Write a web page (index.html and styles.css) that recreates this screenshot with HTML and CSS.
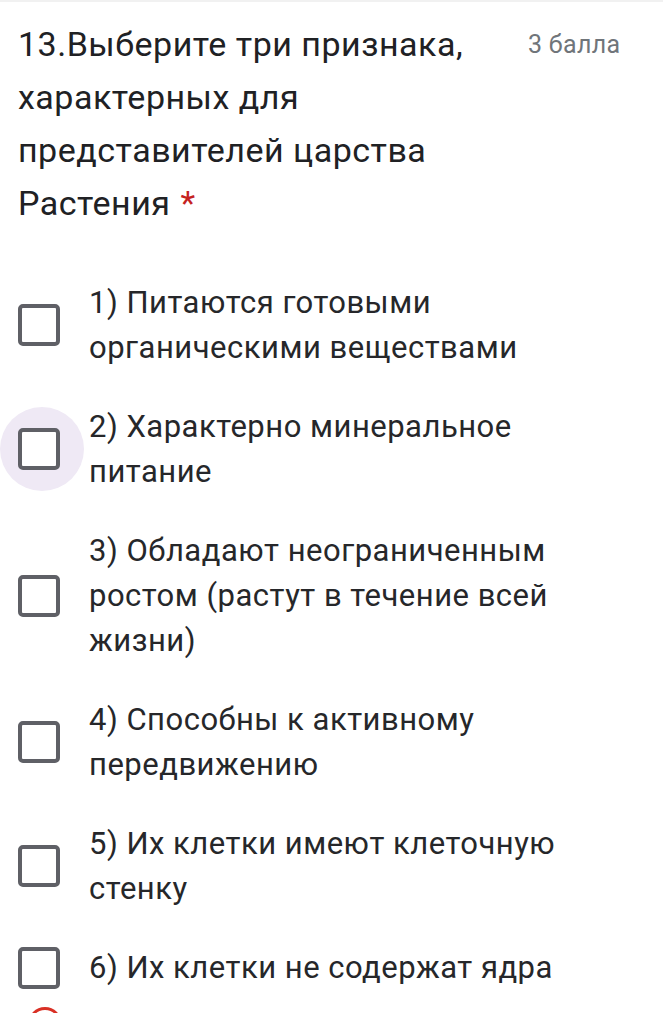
FILE: index.html
```html
<!DOCTYPE html>
<html lang="ru">
<head>
  <meta charset="UTF-8">
  <title>Вопрос 13</title>
  <link rel="stylesheet" href="styles.css">
</head>
<body>
  <div class="question">
    <div class="q-head">
      <div class="q-title">13.Выберите три признака, характерных для представителей царства Растения<span class="req">*</span></div>
      <div class="q-points">3 балла</div>
    </div>

    <div class="options">
      <label class="option">
        <span class="box-wrap"><span class="box"></span></span>
        <span class="opt-text">1) Питаются готовыми органическими веществами</span>
      </label>
      <label class="option">
        <span class="box-wrap focus"><span class="box"></span></span>
        <span class="opt-text">2) Характерно минеральное питание</span>
      </label>
      <label class="option">
        <span class="box-wrap"><span class="box"></span></span>
        <span class="opt-text">3) Обладают неограниченным ростом (растут в течение всей жизни)</span>
      </label>
      <label class="option">
        <span class="box-wrap"><span class="box"></span></span>
        <span class="opt-text">4) Способны к активному передвижению</span>
      </label>
      <label class="option">
        <span class="box-wrap"><span class="box"></span></span>
        <span class="opt-text">5) Их клетки имеют клеточную стенку</span>
      </label>
      <label class="option">
        <span class="box-wrap"><span class="box"></span></span>
        <span class="opt-text">6) Их клетки не содержат ядра</span>
      </label>
    </div>

    <div class="error-row"><span class="error-icon"></span></div>
  </div>
</body>
</html>
```

FILE: styles.css
```css
body { margin: 0; background: #fff; color: #202124; font-family: Roboto, "Noto Sans", sans-serif; overflow: hidden; }
.question { padding: 16px 0 0 18px; border-top: 2px solid #f1f1f1; }
.q-head { display: flex; align-items: flex-start; }
.q-title { width: 470px; font-size: 34px; line-height: 53px; letter-spacing: 0.5px; color: #202124; }
.req { margin-left: 10px; color: #c5221f; line-height: 1; }
.q-points { margin-left: 40px; font-size: 25px; line-height: 53px; letter-spacing: 0.3px; color: #70757a; }

.options { display: flex; flex-direction: column; gap: 34px; margin-top: 50px; }
.option { display: flex; align-items: center; gap: 29px; }
.box-wrap { width: 42px; height: 42px; display: flex; align-items: center; justify-content: center; flex: none; position: relative; }
.box-wrap.focus::before { content: ""; position: absolute; left: -18px; top: -21px; width: 84px; height: 84px; border-radius: 50%; background: #efe9f5; }
.box { width: 42px; height: 42px; box-sizing: border-box; border: 4px solid #5f6066; border-radius: 5px; background: #fff; position: relative; }
.opt-text { width: 480px; font-size: 31px; line-height: 45px; letter-spacing: 0.5px; color: #26272a; }

.error-row { margin-top: 17px; padding-left: 10px; }
.error-icon { display: block; width: 28px; height: 28px; border-radius: 50%; border: 3px solid #d93025; }
```
